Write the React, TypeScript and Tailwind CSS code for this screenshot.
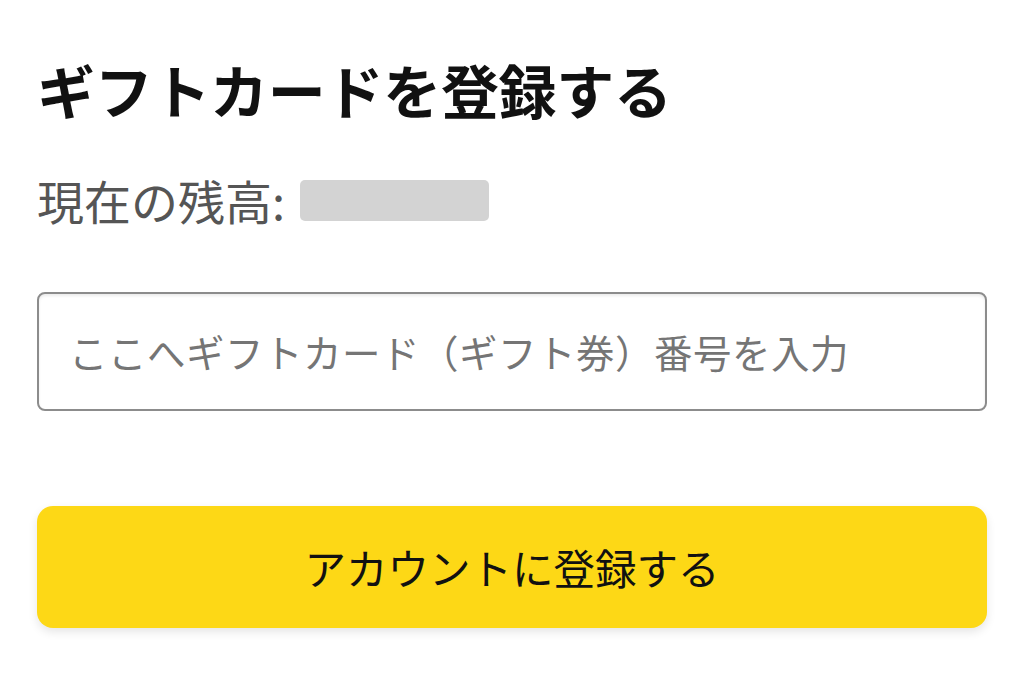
export default function App() {
  return (
    <div
      className="w-[1024px] h-[674px] bg-white overflow-hidden px-[37px]"
      style={{ fontFamily: '"Noto Sans CJK JP", "Noto Sans", sans-serif' }}
    >
      <h1 className="pt-[56px] text-[58px] leading-[66px] font-bold text-[#111111] tracking-[-0.3px]">
        ギフトカードを登録する
      </h1>

      <div className="mt-[48px] flex items-center h-[60px]">
        <span className="text-[47px] leading-[60px] text-[#555555]">現在の残高:</span>
        <span className="ml-[15px] w-[189px] h-[41px] rounded-[5px] bg-[#d3d3d3]" />
      </div>

      <div className="mt-[62px] h-[119px] rounded-[8px] border-2 border-[#8c8c8c] shadow-[inset_0_2px_3px_rgba(0,0,0,0.08)] flex items-center pl-[30px]">
        <span className="text-[38.5px] text-[#757575] tracking-[0.5px]">
          ここへギフトカード（ギフト券）番号を入力
        </span>
      </div>

      <button className="mt-[95px] w-full h-[122px] rounded-[16px] bg-[#fdd816] shadow-[0_4px_10px_rgba(0,0,0,0.1)] flex items-center justify-center text-[41.5px] text-[#111111]">
        アカウントに登録する
      </button>
    </div>
  )
}
